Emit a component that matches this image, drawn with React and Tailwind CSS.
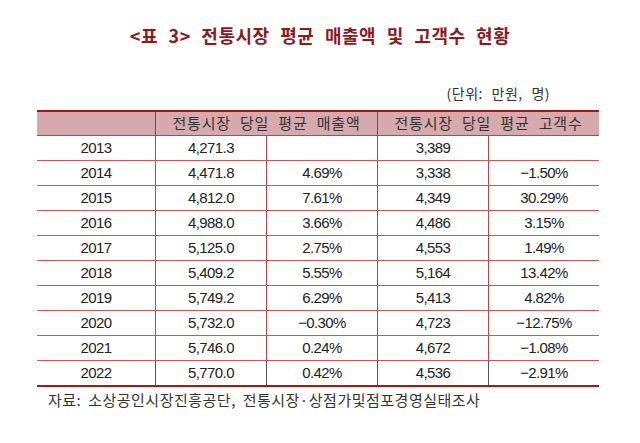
import React from "react";

const rows = [
  ["2013", "4,271.3", "", "3,389", ""],
  ["2014", "4,471.8", "4.69%", "3,338", "−1.50%"],
  ["2015", "4,812.0", "7.61%", "4,349", "30.29%"],
  ["2016", "4,988.0", "3.66%", "4,486", "3.15%"],
  ["2017", "5,125.0", "2.75%", "4,553", "1.49%"],
  ["2018", "5,409.2", "5.55%", "5,164", "13.42%"],
  ["2019", "5,749.2", "6.29%", "5,413", "4.82%"],
  ["2020", "5,732.0", "−0.30%", "4,723", "−12.75%"],
  ["2021", "5,746.0", "0.24%", "4,672", "−1.08%"],
  ["2022", "5,770.0", "0.42%", "4,536", "−2.91%"],
];

const kr = { fontFamily: '"Noto Sans CJK KR", "Noto Sans", sans-serif' };
const num = { fontFamily: '"Liberation Sans", Arial, sans-serif' };

export default function App() {
  return (
    <div className="w-[640px] h-[443px] bg-white text-[#222] overflow-hidden">
      <div
        className="pt-[22px] text-center text-[18px] font-bold text-[#8b1a1f] leading-[26px] tracking-[0.5px] [word-spacing:6px]"
        style={kr}
      >
        &lt;표 3&gt; 전통시장 평균 매출액 및 고객수 현황
      </div>
      <div className="mt-[35px] flex justify-end pr-[90px] text-[14px] leading-[20px] text-[#333] tracking-[0.5px] [word-spacing:5px]" style={kr}>
        (단위: 만원, 명)
      </div>
      <div className="ml-[37px] mt-[7px] w-[562px]">
        <div className="flex h-[26px] border-t-2 border-b border-t-[#9b1b1e] border-b-[#b3474b] bg-[#d6aaac] text-[15px] text-[#333]" style={kr}>
          <div className="w-[118px]" />
          <div className="w-[222px] border-l border-[#555] flex items-center justify-center tracking-[0.8px] [word-spacing:5px]">전통시장 당일 평균 매출액</div>
          <div className="w-[222px] border-l border-[#555] flex items-center justify-center tracking-[0.8px] [word-spacing:5px]">전통시장 당일 평균 고객수</div>
        </div>
        {rows.map((r, i) => {
          const last = i === rows.length - 1;
          const vb = last ? "border-[#555]" : "border-[#b3474b]";
          return (
            <div
              key={r[0]}
              className={
                "flex text-[15px] tracking-[-0.6px] text-[#222] " +
                (last ? "h-[26px] border-b-2 border-[#9b1b1e]" : "h-[25px] border-b border-[#c2585b]")
              }
              style={num}
            >
              <div className="w-[118px] flex items-center justify-center">{r[0]}</div>
              <div className={"w-[111px] flex items-center justify-center border-l " + vb}>{r[1]}</div>
              <div className={"w-[111px] flex items-center justify-center border-l " + vb}>{r[2]}</div>
              <div className={"w-[111px] flex items-center justify-center border-l " + vb}>{r[3]}</div>
              <div className={"w-[111px] flex items-center justify-center border-l " + vb}>{r[4]}</div>
            </div>
          );
        })}
      </div>
      <div className="ml-[48px] mt-[3px] text-[15px] leading-[20px] text-[#333] tracking-[0.5px] [word-spacing:3px]" style={kr}>
        자료: 소상공인시장진흥공단, 전통시장·상점가및점포경영실태조사
      </div>
    </div>
  );
}
